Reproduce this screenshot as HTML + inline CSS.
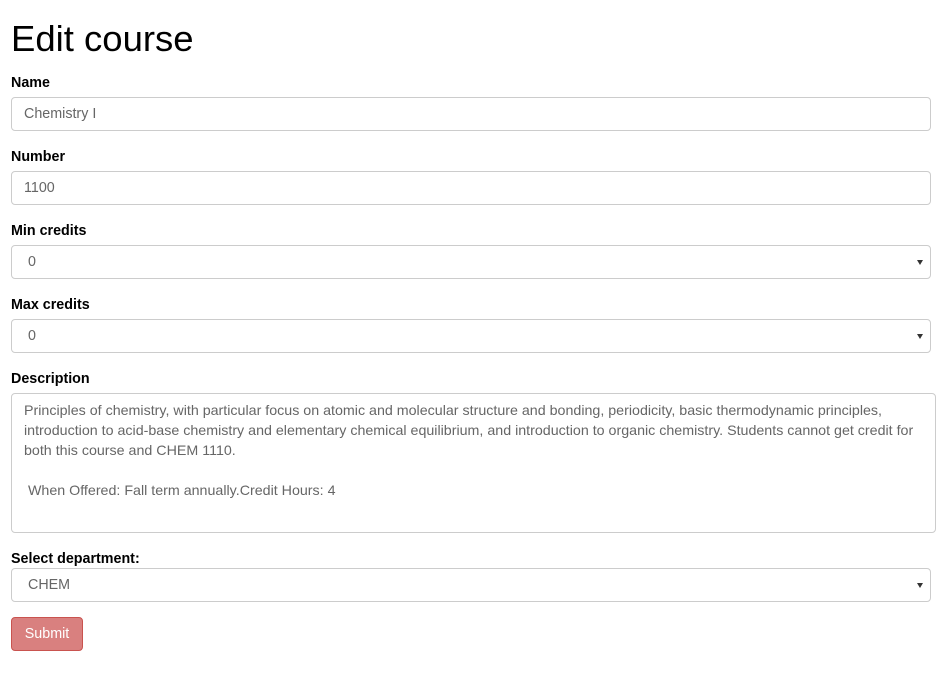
<!DOCTYPE html>
<html><head><style>
body{margin:0;background:#fff;font-family:"Liberation Sans",sans-serif;color:#000;width:942px;height:675px;position:relative;overflow:hidden}
h1{position:absolute;left:11px;top:15px;margin:0;font-weight:normal;font-size:36.5px;line-height:48px}
.l{position:absolute;left:11px;font-weight:bold;font-size:14.3px;line-height:20px;top:0}
.i{position:absolute;left:11px;width:918px;height:32px;border:1px solid #ccc;border-radius:4px;font-size:14.3px;color:#666;line-height:33px;box-sizing:content-box}
.i span{position:absolute;left:12px}
.s span{left:16px}
.s:after{content:"";position:absolute;right:7px;top:14px;border-left:3px solid transparent;border-right:3px solid transparent;border-top:5px solid #333}
.t{position:absolute;left:11px;top:393px;width:923px;height:138px;border:1px solid #ccc;border-radius:4px;font-size:14.25px;color:#666;line-height:20px}
.t div{position:absolute;left:12px;top:7px;white-space:pre}
.b{position:absolute;left:11px;top:617px;width:70px;height:32px;background:#d9807f;border:1px solid #c9534f;border-radius:4px;color:#fff;font-size:14.3px;line-height:33px;text-align:center}
</style></head><body>
<h1>Edit course</h1>
<div class="l" style="top:73px">Name</div>
<div class="i" style="top:97px"><span>Chemistry I</span></div>
<div class="l" style="top:147px">Number</div>
<div class="i" style="top:171px"><span>1100</span></div>
<div class="l" style="top:221px">Min credits</div>
<div class="i s" style="top:245px"><span>0</span></div>
<div class="l" style="top:295px">Max credits</div>
<div class="i s" style="top:319px"><span>0</span></div>
<div class="l" style="top:369px">Description</div>
<div class="t"><div>Principles of chemistry, with particular focus on atomic and molecular structure and bonding, periodicity, basic thermodynamic principles,
introduction to acid-base chemistry and elementary chemical equilibrium, and introduction to organic chemistry. Students cannot get credit for
both this course and CHEM 1110.

 When Offered: Fall term annually.Credit Hours: 4</div></div>
<div class="l" style="top:549px">Select department:</div>
<div class="i s" style="top:568px"><span>CHEM</span></div>
<div class="b">Submit</div>
</body></html>
